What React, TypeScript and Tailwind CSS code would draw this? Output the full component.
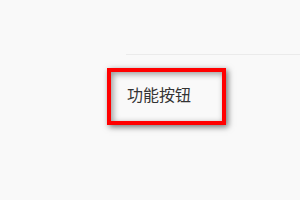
export default function App() {
  return (
    <div
      className="w-[300px] h-[200px] bg-[#f9f9f9] overflow-hidden"
      style={{ fontFamily: '"Noto Sans CJK SC", "Noto Sans", sans-serif' }}
    >
      <div className="pt-[54px]">
        <div className="ml-[126px] h-px bg-[#ebebeb]" />
        <div className="ml-[107px] mt-[13px] w-[119px] h-[57px] border-4 border-[#ff0000] bg-[#f9f9f9] shadow-[2px_2px_6px_rgba(0,0,0,0.55),inset_2px_2px_6px_rgba(0,0,0,0.4)] pl-[16px] pt-[10px]">
          <span className="text-[16px] leading-[24px] text-[#333333]">功能按钮</span>
        </div>
      </div>
    </div>
  );
}
